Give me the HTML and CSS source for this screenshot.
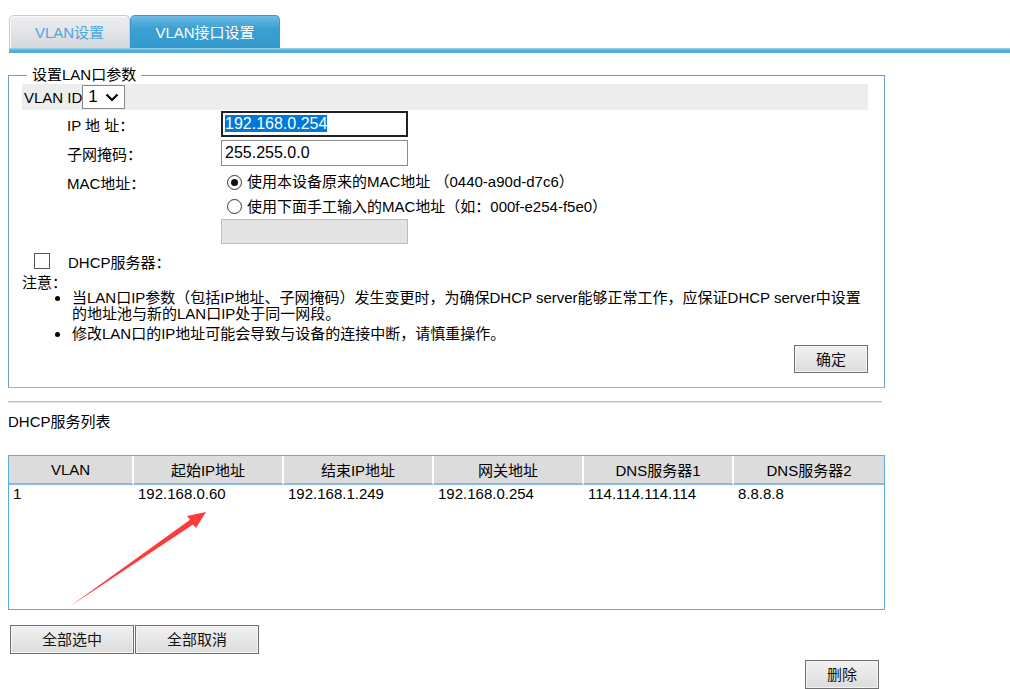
FILE: index.html
```html
<!DOCTYPE html>
<html lang="zh-CN">
<head>
<meta charset="utf-8">
<title>VLAN接口设置</title>
<link rel="stylesheet" href="styles.css">
</head>
<body>
<div class="page">
  <div class="tabs">
    <div class="tab tab-off">VLAN设置</div>
    <div class="tab tab-on">VLAN接口设置</div>
  </div>
  <div class="tabbar"></div>

  <fieldset class="lanbox">
    <legend>设置LAN口参数</legend>
    <div class="vlanrow">
      <span>VLAN ID</span>
      <div class="selbox">
        <span>1</span>
        <svg width="14" height="10" viewBox="0 0 14 10"><path d="M1.5 2.5 L7 8 L12.5 2.5" fill="none" stroke="#000" stroke-width="2.2"/></svg>
      </div>
    </div>
    <div class="frow r-ip">
      <div class="flabel">IP 地 址：</div>
      <div class="inp inp-focus"><span class="sel">192.168.0.254</span></div>
    </div>
    <div class="frow r-mask">
      <div class="flabel">子网掩码：</div>
      <div class="inp">255.255.0.0</div>
    </div>
    <div class="frow r-mac1">
      <div class="flabel">MAC地址：</div>
      <label class="radio"><span class="rb rb-on"></span>使用本设备原来的MAC地址 （0440-a90d-d7c6）</label>
    </div>
    <div class="frow r-mac2">
      <div class="flabel"></div>
      <label class="radio"><span class="rb"></span>使用下面手工输入的MAC地址（如：000f-e254-f5e0）</label>
    </div>
    <div class="frow r-mac3">
      <div class="flabel"></div>
      <div class="inp inp-dis"></div>
    </div>
    <div class="dhcprow">
      <span class="cb"></span>
      <span>DHCP服务器：</span>
    </div>
    <div class="note">注意：</div>
    <ul class="notes">
      <li>当LAN口IP参数（包括IP地址、子网掩码）发生变更时，为确保DHCP server能够正常工作，应保证DHCP server中设置的地址池与新的LAN口IP处于同一网段。</li>
      <li>修改LAN口的IP地址可能会导致与设备的连接中断，请慎重操作。</li>
    </ul>
    <div class="okrow"><button class="btn btn-ok">确定</button></div>
  </fieldset>

  <div class="sep"></div>
  <div class="listtitle">DHCP服务列表</div>

  <div class="tablebox">
    <table class="dtable">
      <thead>
        <tr><th class="c1">VLAN</th><th>起始IP地址</th><th>结束IP地址</th><th>网关地址</th><th>DNS服务器1</th><th class="c6">DNS服务器2</th></tr>
      </thead>
      <tbody>
        <tr><td>1</td><td>192.168.0.60</td><td>192.168.1.249</td><td>192.168.0.254</td><td>114.114.114.114</td><td>8.8.8.8</td></tr>
      </tbody>
    </table>
    <svg class="arrow" width="1010" height="689" viewBox="0 0 1010 689">
      <polygon points="69,607 193,524.5 196,528 206,512 187,516 190,519.8" fill="#ff3a3a"/>
    </svg>
  </div>

  <div class="selbtns">
    <button class="btn btn-wide">全部选中</button>
    <button class="btn btn-wide">全部取消</button>
  </div>
  <div class="delrow"><button class="btn btn-del">删除</button></div>
</div>
</body>
</html>
```

FILE: styles.css
```css
html, body {
  margin: 0;
  padding: 0;
  background: #fff;
}
body {
  font-family: "Liberation Sans", "Noto Sans CJK SC", sans-serif;
  font-size: 15px;
  color: #000;
  overflow: hidden;
}
.page {
  position: relative;
  width: 1010px;
  height: 689px;
}

/* tabs */
.tabs {
  display: flex;
  padding: 15px 0 0 9px;
  height: 33px;
}
.tab {
  height: 33px;
  box-sizing: border-box;
  border-radius: 5px 5px 0 0;
  text-align: center;
  line-height: 34px;
  font-size: 15px;
}
.tab-off {
  width: 121px;
  color: #4ea6dc;
  border: 1px solid #c9cdd1;
  border-bottom: none;
  background: linear-gradient(#eeeff1, #d6d8db);
  box-shadow: inset 1px 1px 0 #fafafa;
}
.tab-on {
  width: 150px;
  color: #fff;
  border: 1px solid #3a98cc;
  border-bottom: none;
  background: linear-gradient(#6cbde6, #3b9fd2 40%, #3399cc);
}
.tabbar {
  margin-left: 9px;
  height: 5px;
  background: linear-gradient(#a4d5ee, #58b2de 40%, #4aaad8);
}

/* fieldset */
.lanbox {
  margin: 13px 0 0 8px;
  width: 877px;
  min-width: 0;
  box-sizing: border-box;
  padding: 0 16px 14px 13px;
  border: 1px solid #6e9dc4;
  border-bottom-color: #9db6cb;
}
.lanbox legend {
  margin-left: 5px;
  padding: 0 5px;
  font-size: 15px;
  line-height: 18px;
}
.vlanrow {
  height: 26px;
  background: #eceeed;
  display: flex;
  align-items: center;
  padding-left: 2px;
}
.selbox {
  height: 24px;
  width: 43px;
  box-sizing: border-box;
  border: 1px solid #8a8a8a;
  background: #fff;
  display: flex;
  align-items: center;
  gap: 7px;
  padding-left: 5px;
  font-size: 17px;
}

.frow {
  display: flex;
  align-items: center;
}
.flabel {
  width: 199px;
  padding-left: 45px;
  box-sizing: border-box;
  flex: none;
}
.r-ip { margin-top: 1px; height: 26px; }
.r-mask { margin-top: 3px; height: 26px; }
.r-mac1 { height: 24px; margin-top: 4px; }
.r-mac2 { height: 25px; }
.r-mac3 { height: 25px; }

.inp {
  width: 187px;
  height: 26px;
  box-sizing: border-box;
  border: 1px solid #8c8c8c;
  background: #fff;
  font-size: 16px;
  line-height: 24px;
  padding-left: 3px;
}
.inp-focus {
  border: 2px solid #222;
  padding-left: 2px;
  line-height: 22px;
}
.inp-focus .sel {
  background: #0078d7;
  color: #fff;
}
.inp-dis {
  height: 25px;
  background: #e3e3e3;
  border-color: #bdbdbd;
}
.radio {
  display: flex;
  align-items: center;
  margin-left: 6px;
  line-height: 24px;
}
.rb {
  width: 15px;
  height: 15px;
  box-sizing: border-box;
  border: 1px solid #333;
  border-radius: 50%;
  background: #fff;
  margin-right: 5px;
  position: relative;
}
.rb-on::after {
  content: "";
  position: absolute;
  left: 3px;
  top: 3px;
  width: 7px;
  height: 7px;
  border-radius: 50%;
  background: #111;
}

.dhcprow {
  margin-top: 5px;
  height: 24px;
  display: flex;
  align-items: center;
}
.cb {
  width: 16px;
  height: 16px;
  box-sizing: border-box;
  border: 1px solid #555;
  background: #fff;
  margin-left: 12px;
  margin-right: 18px;
}
.note {
  line-height: 20px;
}
.notes {
  list-style: none;
  margin: -3px 0 0 0;
  padding: 0 0 0 50px;
}
.notes li {
  position: relative;
  line-height: 16px;
  margin-bottom: 4px;
  width: 790px;
}
.notes li::before {
  content: "";
  position: absolute;
  left: -17px;
  top: 6px;
  width: 5px;
  height: 5px;
  border-radius: 50%;
  background: #000;
}
.okrow {
  display: flex;
  justify-content: flex-end;
  margin-top: -1px;
}

/* buttons */
.btn {
  font-family: "Liberation Sans", "Noto Sans CJK SC", sans-serif;
  font-size: 15px;
  color: #111;
  border: 1px solid #6f6f6f;
  box-shadow: inset 0 0 0 1px #f4f4f4;
  background: linear-gradient(#f1f1f1, #dcdcdc);
  padding: 0 0 2px 0;
  margin: 0;
}
.btn-ok { width: 74px; height: 28px; }

.sep {
  margin: 13px 0 0 8px;
  width: 874px;
  height: 0;
  border-top: 1px solid #bcbcbc;
  border-bottom: 1px solid #e6e6e6;
}
.listtitle {
  margin: 10px 0 0 8px;
  line-height: 18px;
}

/* table */
.tablebox {
  margin: 24px 0 0 8px;
  width: 877px;
  height: 155px;
  box-sizing: border-box;
  border: 1px solid #58acd8;
  border-top-color: #8a9bd2;
}
.dtable {
  width: 100%;
  border-collapse: separate;
  border-spacing: 0;
  table-layout: fixed;
}
.dtable th {
  box-sizing: border-box;
  height: 29px;
  background: #dcdcdc;
  font-weight: normal;
  border-right: 2px solid #fff;
  border-bottom: 2px solid #8fb6e2;
  padding: 0;
  width: 150px;
}
.dtable th.c1 { width: 125px; }
.dtable th.c6 { width: auto; border-right: none; }
.dtable td {
  padding: 0 0 0 4px;
  line-height: 18px;
  height: 18px;
  vertical-align: middle;
}
.arrow {
  position: absolute;
  left: 0;
  top: 0;
  pointer-events: none;
}

.selbtns {
  margin: 15px 0 0 10px;
  display: flex;
  gap: 1px;
}
.btn-wide { width: 124px; height: 29px; }
.delrow {
  margin: 6px 0 0 805px;
}
.btn-del { width: 74px; height: 29px; }
```
